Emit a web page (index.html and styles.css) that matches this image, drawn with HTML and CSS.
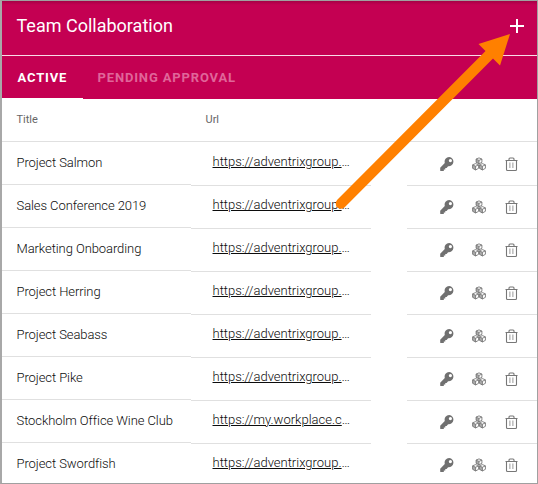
FILE: index.html
```
<!DOCTYPE html>
<html lang="en">
<head>
<meta charset="utf-8">
<title>Team Collaboration</title>
<link rel="stylesheet" href="styles.css">
</head>
<body>
<svg class="defs" width="0" height="0">
  <symbol id="key" viewBox="0 0 14 14">
    <path fill-rule="evenodd" d="M9.3 0a4.6 4.6 0 0 0-4.5 5.9L.2 10.800V13.700l.3.3h3.300v-1.500h1.500V11h1.300l1.500-1.700A4.650 4.650 0 1 0 9.3 0zM10.400 2a1.600 1.600 0 1 1 0 3.200 1.600 1.600 0 0 1 0-3.200z"/>
  </symbol>
  <symbol id="cubes" viewBox="0 0 14 14">
    <path class="cube-side" d="M4 2.300 7 3.600v3.200L4 5.300zM.6 8l3 1.200V13l-3-1.700zM7.400 8l3 1.200V13l-3-1.700z"/>
    <path class="cube-box" d="M7 .9 9.900 2v3.300L7 6.800 4.100 5.300V2zM4.100 2.100 7 3.400l2.900-1.300M7 3.400v3.200M3.600 6.600l3 1.200v3.500l-3 1.700-3-1.700V7.800zM.7 8l2.900 1.200L6.500 8M3.600 9.200V13M10.400 6.600l3 1.200v3.500l-3 1.700-3-1.700V7.800zM7.500 8l2.900 1.200L13.300 8M10.400 9.200V13"/>
  </symbol>
  <symbol id="trash" viewBox="0 0 13 15">
    <path class="line" d="M.5 3.500h12M4 3.500V2Q4 1 5 1h3q1 0 1 1v1.500M1.500 3.500v9q0 1 1 1h8q1 0 1-1v-9"/>
    <path class="slot" d="M4.900 5.500v5.500M7.900 5.500v5.500"/>
  </symbol>
</svg>
<main class="panel">
  <header class="bar">
    <h1>Team Collaboration</h1>
    <svg class="add" viewBox="0 0 14 14"><path d="M7 0v14M0 7h14"/></svg>
  </header>
  <nav class="tabs"><a class="tab active">ACTIVE</a><a class="tab">PENDING APPROVAL</a></nav>
  <div class="head"><span>Title</span><span>Url</span></div>
  <div id="rows"></div>
</main>
<svg class="arrow" viewBox="0 0 538 484"><path class="shaft" d="M341 203.500 490 54"/><path class="tip" d="M510 34 478.500 44 500 65.500z"/></svg>
<script src="rows.js"></script>
</body>
</html>
```
FILE: styles.css
```
* { box-sizing: border-box; }
body {
  margin: 0;
  font-family: Roboto, "Liberation Sans", sans-serif;
  color: #0c0c0c;
}
.defs { position: absolute; }
.panel {
  width: 538px;
  height: 484px;
  overflow: hidden;
  background: #fff;
  border: 1px solid #a0a0a0;
  border-left: 2px solid #a8a8a8;
}
.bar {
  height: 55px;
  padding: 0 13px 4px 14.500px;
  display: flex;
  align-items: center;
  justify-content: space-between;
  background: linear-gradient(#a60046, #c40052 4px);
  border-bottom: 1px solid #f9dce8;
}
h1 {
  margin: 0;
  font-size: 18px;
  font-weight: 400;
  line-height: 24px;
  color: #fff;
}
.add { width: 14px; height: 14px; stroke: #fff; stroke-width: 2; }
.tabs { display: flex; height: 43px; background: #c40052; }
.tab {
  padding: 0 14.500px;
  line-height: 43px;
  font-size: 13px;
  font-weight: 700;
  letter-spacing: .85px;
  color: #e0669a;
  white-space: nowrap;
}
.tab.active { width: 81px; padding-left: 15.500px; color: #fff; border-bottom: 1px solid #fff; }
.head {
  display: grid;
  grid-template-columns: 189px 1fr;
  height: 43px;
  padding-left: 14.500px;
  border-bottom: 1px solid #e0e0e0;
  font-size: 11px;
  line-height: 41px;
  color: #666;
}
.row {
  display: grid;
  grid-template-columns: 189px 180px 166px;
  height: 43px;
  font-size: 13px;
  font-weight: 300;
}
.row > * { border-bottom: 1px solid #e0e0e0; }
.title { height: 43px; padding-left: 14.500px; line-height: 41px; letter-spacing: -.08px; }
.url { height: 44px; padding-left: 21.500px; line-height: 39px; }
.url a { text-decoration: underline; text-decoration-thickness: 1px; }
.actions {
  height: 44px;
  width: 130px;
  margin-left: 36px;
  padding: 15px 0 0 33px;
  display: flex;
  align-items: flex-start;
  fill: #707070;
}
.actions svg { display: block; flex: none; }
.key { width: 14px; height: 14px; }
.cubes { width: 14px; height: 14px; margin-left: 18px; }
.trash { width: 13px; height: 15px; margin-left: 19px; }
.line { fill: none; stroke: #777; stroke-width: 1.1; }
.slot { fill: none; stroke: #999; stroke-width: 1; }
.cube-box { fill: none; stroke: #707070; stroke-width: .85; stroke-linejoin: round; }
.cube-side { fill: #aaa; }
.arrow { position: absolute; left: 0; top: 0; width: 538px; height: 484px; }
.shaft { fill: none; stroke: #ff8000; stroke-width: 10.500; stroke-linecap: round; }
.tip { fill: #ff8000; }
```
FILE: rows.js
```
const adventrix = ["https://adventrixgroup.", "…"];
const items = [
  ["Project Salmon", adventrix],
  ["Sales Conference 2019", adventrix],
  ["Marketing Onboarding", adventrix],
  ["Project Herring", adventrix],
  ["Project Seabass", adventrix],
  ["Project Pike", adventrix],
  ["Stockholm Office Wine Club", ["https://my.workplace.c", "…"]],
  ["Project Swordfish", adventrix]
];
document.getElementById("rows").innerHTML = items.map(([title, [url, rest]]) => `
  <div class="row">
    <div class="title">${title}</div>
    <div class="url"><a>${url}</a>${rest}</div>
    <div class="actions">
      <svg class="key"><use href="#key"/></svg>
      <svg class="cubes"><use href="#cubes"/></svg>
      <svg class="trash"><use href="#trash"/></svg>
    </div>
  </div>`).join("");
```
